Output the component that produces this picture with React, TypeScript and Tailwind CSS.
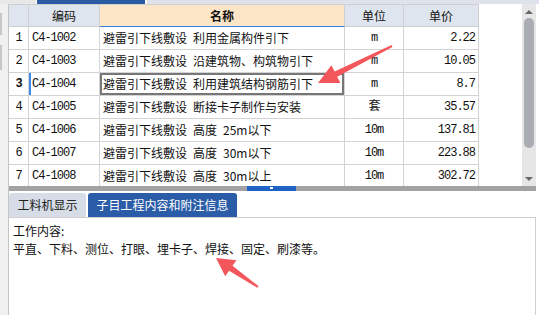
import React from "react";

const rows = [
  { n: "1", code: "C4-1002", name: "避雷引下线敷设\u2002利用金属构件引下", unit: "m", price: "2.22" },
  { n: "2", code: "C4-1003", name: "避雷引下线敷设\u2002沿建筑物、构筑物引下", unit: "m", price: "10.05" },
  { n: "3", code: "C4-1004", name: "避雷引下线敷设\u2002利用建筑结构钢筋引下", unit: "m", price: "8.7" },
  { n: "4", code: "C4-1005", name: "避雷引下线敷设\u2002断接卡子制作与安装", unit: "套", price: "35.57" },
  { n: "5", code: "C4-1006", name: "避雷引下线敷设\u2002高度\u200225m以下", unit: "10m", price: "137.81" },
  { n: "6", code: "C4-1007", name: "避雷引下线敷设\u2002高度\u200230m以下", unit: "10m", price: "223.88" },
  { n: "7", code: "C4-1008", name: "避雷引下线敷设\u2002高度\u200230m以上", unit: "10m", price: "302.72" },
];

const mono = "font-['Liberation_Mono','Noto_Sans_CJK_SC',monospace] text-[12px] tracking-[-1px]";

export default function App() {
  return (
    <div className="relative w-[539px] h-[315px] overflow-hidden bg-white flex flex-col text-[12px] text-[#111111] font-['Noto_Sans_CJK_SC',sans-serif]">
      {/* top strip */}
      <div className="flex h-[4px] shrink-0">
        <div className="w-[36px] bg-[#e8e8e8]" />
        <div className="w-[1px] bg-white" />
        <div className="w-[108px] bg-[#2c5ba6]" />
        <div className="w-[2px] bg-white" />
        <div className="flex-1 bg-[#dfe2ea]" />
      </div>

      <div className="flex flex-1 min-h-0">
        {/* left gutter */}
        <div className="w-[9px] shrink-0 bg-[#f0f0f0] border-r border-[#c4c4c4] flex flex-col">
          <div className="mt-[9px] h-[22px] w-[2px] bg-[#c6c6c6]" />
          <div className="mt-[10px] h-[25px] w-[2px] bg-[#c6c6c6]" />
        </div>

        <div className="flex-1 flex flex-col min-w-0">
          {/* grid area */}
          <div className="h-[182px] flex shrink-0">
            <div className="w-[470px] overflow-hidden flex flex-col">
              {/* header */}
              <div className="flex h-[23px] shrink-0 border-t border-[#cfcfcf]">
                <div className="w-[20px] bg-[#dfe5ee] border-r border-b border-[#cfcfcf]" />
                <div className="w-[71px] bg-[#dfe5ee] border-r border-b border-[#cfcfcf] flex items-center justify-center">编码</div>
                <div className="w-[245px] bg-[#fde5c7] border-r border-[#cfcfcf] border-b border-b-[#3c80da] flex items-center justify-center font-bold">名称</div>
                <div className="w-[59px] bg-[#dfe5ee] border-r border-b border-[#cfcfcf] flex items-center justify-center">单位</div>
                <div className="w-[75px] bg-[#dfe5ee] border-r border-b border-[#cfcfcf] flex items-center justify-center">单价</div>
              </div>
              {rows.map((r) => {
                const sel = r.n === "3";
                return (
                  <div key={r.n} className="flex h-[23px] shrink-0">
                    <div className={`w-[20px] border-r border-b border-[#d3d3d3] flex items-center justify-center ${mono} ${sel ? "font-bold" : ""}`}>{r.n}</div>
                    <div className={`w-[71px] border-r border-b border-[#d3d3d3] flex items-center pl-[3px] ${mono} ${sel ? "shadow-[inset_2px_0_0_#3b8de8]" : ""}`}>{r.code}</div>
                    <div className={`w-[245px] border-r border-b border-[#d3d3d3] flex items-center pl-[3px] whitespace-nowrap ${sel ? "shadow-[inset_0_0_0_2px_#777777]" : ""}`}>{r.name}</div>
                    <div className={`w-[59px] border-r border-b border-[#d3d3d3] flex items-center justify-center ${mono}`}>{r.unit}</div>
                    <div className={`w-[75px] border-r border-b border-[#d3d3d3] flex items-center justify-end pr-[3px] ${mono}`}>{r.price}</div>
                  </div>
                );
              })}
            </div>
            <div className="flex-1" />
            {/* vertical scrollbar */}
            <div className="w-[14px] bg-[#e6e6e6] flex flex-col items-center">
              <div className="mt-[6px] w-0 h-0 border-l-[4px] border-r-[4px] border-b-[4px] border-l-transparent border-r-transparent border-b-[#666666]" />
              <div className="mt-[4px] w-[10px] h-[130px] rounded-full bg-[#a9acb1]" />
              <div className="mt-auto mb-[5px] w-0 h-0 border-l-[4px] border-r-[4px] border-t-[4px] border-l-transparent border-r-transparent border-t-[#666666]" />
            </div>
            <div className="w-[3px]" />
          </div>

          {/* horizontal scrollbar */}
          <div className="flex h-[5px] shrink-0">
            <div className="flex-1 bg-[#a3a3a6] flex">
              <div className="ml-[238px] w-[49px] bg-[#1f63c6] flex justify-center">
                <div className="mt-[1px] w-[3px] h-[2px] bg-white" />
              </div>
            </div>
            <div className="w-[3px]" />
          </div>

          <div className="h-[2px] shrink-0" />

          {/* tabs */}
          <div className="flex h-[24px] shrink-0 items-stretch">
            <div className="w-[77px] rounded-t-[3px] bg-[#d6dde7] flex items-center justify-center text-[#222]">工料机显示</div>
            <div className="ml-[2px] w-[149px] rounded-t-[3px] bg-[#2a5ca8] flex items-center justify-center text-white">子目工程内容和附注信息</div>
          </div>

          {/* content */}
          <div className="flex-1 mr-[3px] border-t border-r border-[#cfcfcf] pt-[4px] pl-[4px] leading-[18px]">
            <div>工作内容:</div>
            <div>平直、下料、测位、打眼、埋卡子、焊接、固定、刷漆等。</div>
          </div>
        </div>
      </div>

      {/* annotation arrows */}
      <svg className="absolute left-0 top-0 pointer-events-none" width="539" height="315" viewBox="0 0 539 315">
        <polygon
          fill="#f4575b"
          points="391.6,45.1 334.6,71.4 331.4,65.2 318,83 340.4,83 337.2,76.8 392.4,46.9"
        />
        <polygon
          fill="#f4575b"
          points="258.6,286.2 232.5,265.7 236.5,260.3 216,258 225.2,276.2 229.1,270.7 257.4,287.8"
        />
      </svg>
    </div>
  );
}
